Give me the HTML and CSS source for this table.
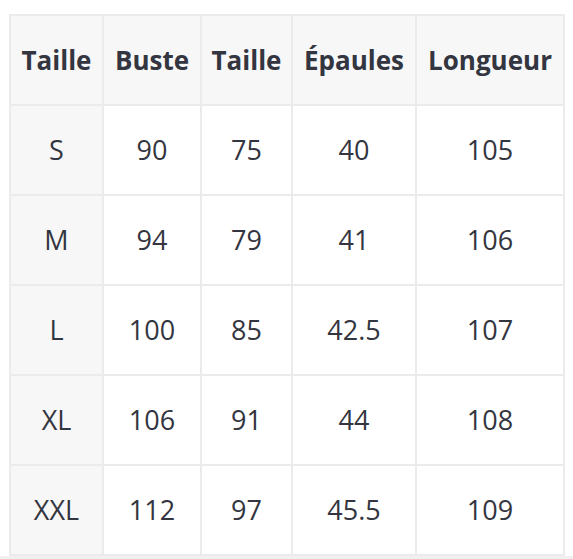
FILE: index.html
```html
<!DOCTYPE html>
<html lang="fr">
<head>
<meta charset="utf-8">
<link rel="stylesheet" href="styles.css">
</head>
<body>
<div class="wrap">
<table class="sizes">
<colgroup>
<col class="c1"><col class="c2"><col class="c3"><col class="c4"><col class="c5">
</colgroup>
<thead>
<tr><th>Taille</th><th>Buste</th><th>Taille</th><th>Épaules</th><th>Longueur</th></tr>
</thead>
<tbody>
<tr><td class="size">S</td><td>90</td><td>75</td><td>40</td><td>105</td></tr>
<tr><td class="size">M</td><td>94</td><td>79</td><td>41</td><td>106</td></tr>
<tr><td class="size">L</td><td>100</td><td>85</td><td>42.5</td><td>107</td></tr>
<tr><td class="size">XL</td><td>106</td><td>91</td><td>44</td><td>108</td></tr>
<tr><td class="size">XXL</td><td>112</td><td>97</td><td>45.5</td><td>109</td></tr>
</tbody>
</table>
</div>
<div class="band"></div>
</body>
</html>
```
FILE: styles.css
```css
html, body {
  margin: 0;
  padding: 0;
  background: #fff;
}
body {
  font-family: "Open Sans", "Noto Sans", sans-serif;
  color: #333540;
}
.wrap {
  padding: 14px 0 0 9px;
}
.sizes {
  border-collapse: collapse;
  table-layout: fixed;
  width: 554px;
}
.c1 { width: 93px; }
.c2 { width: 98px; }
.c3 { width: 91px; }
.c4 { width: 124px; }
.c5 { width: 148px; }
.sizes th,
.sizes td {
  border: 2px solid #ebebeb;
  padding: 28px 0;
  line-height: 32px;
  text-align: center;
  white-space: nowrap;
}
.sizes th {
  background: #f7f7f7;
  font-weight: 700;
  font-size: 26px;
}
.sizes td {
  font-weight: 400;
  font-size: 27px;
}
.sizes td.size {
  background: #f7f7f7;
}
.band {
  height: 20px;
  background: #f0f0f0;
}
```
